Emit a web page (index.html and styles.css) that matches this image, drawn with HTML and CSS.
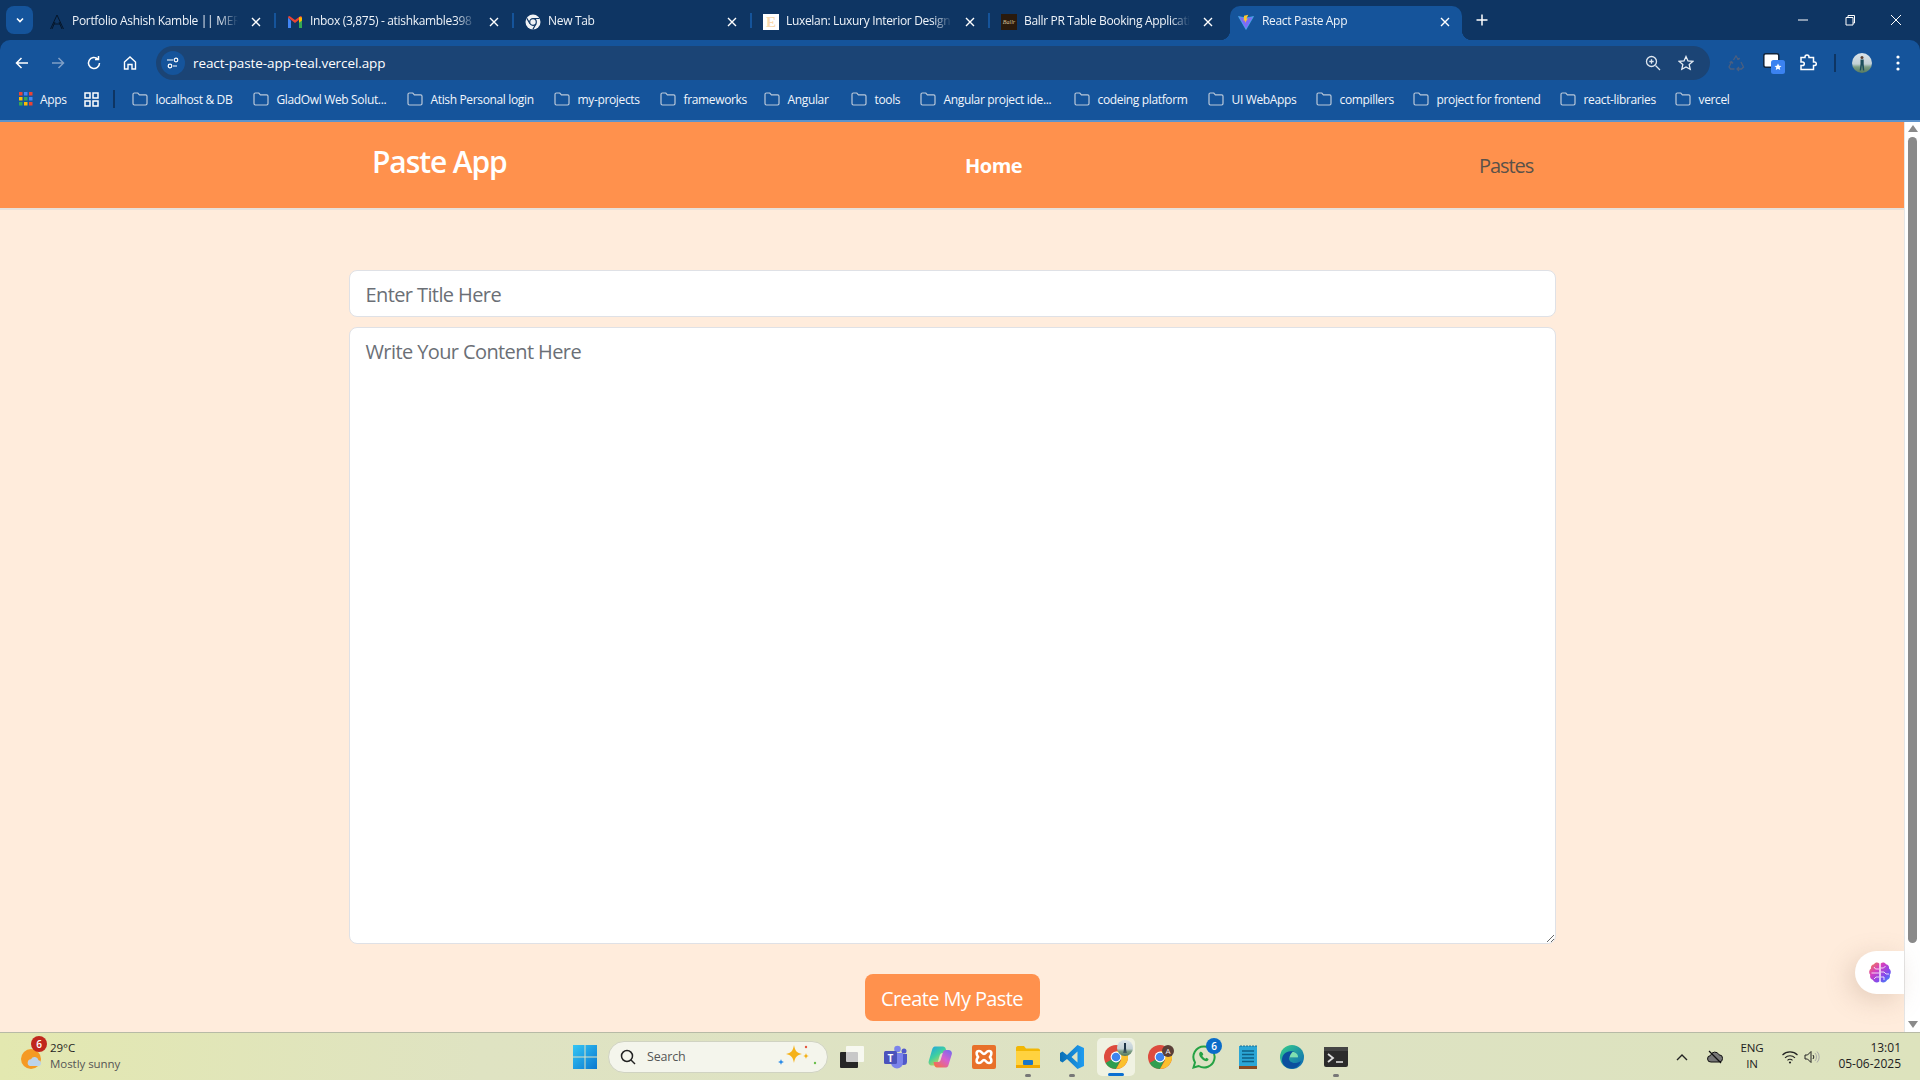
FILE: index.html
```html
<!DOCTYPE html>
<html lang="en">
<head>
<meta charset="utf-8">
<title>React Paste App</title>
<link rel="stylesheet" href="styles.css">
</head>
<body>
<svg class="defs" width="0" height="0" aria-hidden="true">
  <defs>
    <symbol id="x" viewBox="0 0 12 12"><path d="M2 2l8 8M10 2l-8 8" fill="none" stroke="currentColor" stroke-width="1.4"/></symbol>
    <symbol id="folder" viewBox="0 0 16 14"><path d="M1 2.4C1 1.6 1.6 1 2.4 1h3.4l1.6 1.8h6.2c.8 0 1.4.6 1.4 1.4v7.4c0 .8-.6 1.4-1.4 1.4H2.4c-.8 0-1.4-.6-1.4-1.4z" fill="none" stroke="#b9c8da" stroke-width="1.2"/></symbol>
    <symbol id="chrome" viewBox="0 0 24 24">
      <circle cx="12" cy="12" r="12" fill="#dd4b3e"/>
      <path d="M12 12l-5.200 3L1.600 18A12 12 0 0 0 12 24l6-12z" fill="#2f9e4f"/>
      <path d="M12 6h10.400A12 12 0 0 1 12 24l5.200-9z" fill="#fbc02d"/>
      <circle cx="12" cy="12" r="5.400" fill="#fff"/>
      <circle cx="12" cy="12" r="4.300" fill="#3f84ee"/>
    </symbol>
    <linearGradient id="win" x1="0" y1="0" x2="1" y2="1"><stop offset="0" stop-color="#35c6f4"/><stop offset="1" stop-color="#0a78d0"/></linearGradient>
    <linearGradient id="brain" x1="0" y1="0" x2="1" y2="1"><stop offset="0" stop-color="#f5873f"/><stop offset=".35" stop-color="#d63ec0"/><stop offset=".7" stop-color="#7a4df0"/><stop offset="1" stop-color="#2f9bf5"/></linearGradient>
    <linearGradient id="vs" x1="0" y1="0" x2="1" y2="0"><stop offset="0" stop-color="#0a6fb5"/><stop offset="1" stop-color="#1f9cf0"/></linearGradient>
    <linearGradient id="cop-a" x1="0" y1="0" x2=".7" y2="1"><stop offset="0" stop-color="#1f9fe8"/><stop offset=".5" stop-color="#3fd0a0"/><stop offset="1" stop-color="#f5d33c"/></linearGradient>
    <linearGradient id="cop-b" x1="1" y1="0" x2=".2" y2="1"><stop offset="0" stop-color="#6c6cf0"/><stop offset=".5" stop-color="#d65fd0"/><stop offset="1" stop-color="#f5704a"/></linearGradient>
    <linearGradient id="edge" x1="0" y1="0" x2="1" y2="1"><stop offset="0" stop-color="#36d08a"/><stop offset="1" stop-color="#0b63b8"/></linearGradient>
    <linearGradient id="sky" x1="0" y1="0" x2="0" y2="1"><stop offset="0" stop-color="#dbe4ea"/><stop offset=".55" stop-color="#c2d0d6"/><stop offset=".7" stop-color="#7b9d84"/><stop offset="1" stop-color="#55795f"/></linearGradient>
  </defs>
</svg>

<div class="chrome">
  <div class="tabstrip">
    <button class="tab-switch"><svg width="12" height="12" viewBox="0 0 12 12"><path d="M3 4.500l3 3 3-3" fill="none" stroke="#fff" stroke-width="1.600"/></svg></button>
    <div class="tabs">
      <div class="tab">
        <svg class="fav" viewBox="0 0 16 16"><path d="M1.500 15L8 1l6.500 14M4.500 10h7M3 15l3-7M13 15l-3-7" fill="none" stroke="#05162a" stroke-width="1"/></svg>
        <span class="tab-title">Portfolio Ashish Kamble || MERN</span>
        <svg class="close"><use href="#x"/></svg>
      </div>
      <div class="tab sep">
        <svg class="fav" viewBox="0 0 16 16"><path d="M1 3.500V14h3V6.500z" fill="#4285f4"/><path d="M15 3.500V14h-3V6.500z" fill="#34a853"/><path d="M1 3.500L8 9l7-5.500V2.800L13.500 2 8 6 2.500 2 1 2.800z" fill="#ea4335"/><path d="M12 3l3 .5v3L12 8.800z" fill="#fbbc04"/></svg>
        <span class="tab-title">Inbox (3,875) - atishkamble398</span>
        <svg class="close"><use href="#x"/></svg>
      </div>
      <div class="tab sep">
        <svg class="fav" viewBox="0 0 16 16"><circle cx="8" cy="8" r="7.500" fill="#f1f3f6"/><path d="M8 4.500h6.400M5 9.700L1.800 4.200M11 9.700l-3.200 5.800" stroke="#0e3563" stroke-width="1.200"/><circle cx="8" cy="8" r="3.300" fill="#f1f3f6" stroke="#0e3563" stroke-width="1.200"/></svg>
        <span class="tab-title">New Tab</span>
        <svg class="close"><use href="#x"/></svg>
      </div>
      <div class="tab sep">
        <span class="fav fav-e">E</span>
        <span class="tab-title">Luxelan: Luxury Interior Design</span>
        <svg class="close"><use href="#x"/></svg>
      </div>
      <div class="tab sep">
        <span class="fav fav-b">Ballr</span>
        <span class="tab-title">Ballr PR Table Booking Applicati</span>
        <svg class="close"><use href="#x"/></svg>
      </div>
      <div class="tab active">
        <svg class="fav" viewBox="0 0 16 16"><path d="M.5 2.500L8 15.500l7.500-13L8 4z" fill="#7d6cf5"/><path d="M.5 2.500L8 4l7.500-1.500L8 15.500z" fill="none" stroke="#41c6f5" stroke-width=".6"/><path d="M10.300.8L6 1.800l-.3 5 1.500-.3-.3 2.600 3-4.600-1.600.3z" fill="#ffc72c"/></svg>
        <span class="tab-title">React Paste App</span>
        <svg class="close"><use href="#x"/></svg>
      </div>
    </div>
    <svg class="newtab" width="14" height="14" viewBox="0 0 14 14"><path d="M7 1.500v11M1.500 7h11" stroke="#fff" stroke-width="1.500"/></svg>
    <div class="winctl">
      <svg width="12" height="12" viewBox="0 0 12 12"><path d="M1 6h10" stroke="#fff"/></svg>
      <svg width="12" height="12" viewBox="0 0 12 12"><path d="M2 3.500h7v7.500H2zM4 3.500V1.500h6.500V9H9" fill="none" stroke="#fff"/></svg>
      <svg width="12" height="12" viewBox="0 0 12 12"><path d="M1 1l10 10M11 1L1 11" stroke="#fff"/></svg>
    </div>
  </div>

  <div class="toolbar">
    <div class="nav">
      <svg width="16" height="16" viewBox="0 0 16 16"><path d="M14 8H3M7.500 3L2.500 8l5 5" fill="none" stroke="#fff" stroke-width="1.500"/></svg>
      <svg width="16" height="16" viewBox="0 0 16 16"><path d="M2 8h11M8.500 3l5 5-5 5" fill="none" stroke="#7f9fc6" stroke-width="1.500"/></svg>
      <svg width="16" height="16" viewBox="0 0 16 16"><path d="M13.500 8A5.500 5.500 0 1 1 11.800 4M12.500 1v3.600H9" fill="none" stroke="#fff" stroke-width="1.500"/></svg>
      <svg width="16" height="16" viewBox="0 0 16 16"><path d="M2.500 7L8 2l5.500 5v7H10V9.500H6V14H2.500z" fill="none" stroke="#fff" stroke-width="1.400"/></svg>
    </div>
    <div class="omnibox">
      <span class="site-info"><svg width="14" height="14" viewBox="0 0 14 14"><path d="M1 4h6M11 10H7" stroke="#fff" stroke-width="1.200"/><circle cx="10" cy="4" r="1.800" fill="none" stroke="#fff" stroke-width="1.200"/><circle cx="4" cy="10" r="1.800" fill="none" stroke="#fff" stroke-width="1.200"/></svg></span>
      <span class="url">react-paste-app-teal.vercel.app</span>
      <svg class="omni-zoom" width="16" height="16" viewBox="0 0 16 16"><circle cx="6.500" cy="6.500" r="5" fill="none" stroke="#dfe7f0" stroke-width="1.300"/><path d="M10.500 10.500L15 15M4.300 6.500h4.400M6.500 4.300v4.400" stroke="#dfe7f0" stroke-width="1.300"/></svg>
      <svg class="omni-star" width="16" height="16" viewBox="0 0 16 16"><path d="M8 1.500l2 4.400 4.800.5-3.600 3.200 1 4.700L8 11.900l-4.200 2.400 1-4.700L1.200 6.400 6 5.900z" fill="none" stroke="#e6edf5" stroke-width="1.300"/></svg>
    </div>
    <div class="actions">
      <svg class="a-recycle" width="18" height="18" viewBox="0 0 18 18"><path d="M6.500 6L9 2l2.500 4M10 5l3-.5M14 8l2.500 5-2 2h-4M12 13l-2 2 2 2M7.500 15H3.500L2 13l2.500-5M2.500 8.500L4.500 7.500 6 9.500" fill="none" stroke="#4a5f80" stroke-width="1.300"/></svg>
      <span class="a-tabs"><svg width="24" height="28" viewBox="0 0 24 28"><rect x=".8" y="4.800" width="15" height="13.500" rx="2" fill="#fff" stroke="#10243c" stroke-width="1.500"/><rect x="8" y="11" width="14" height="14" rx="2.500" fill="#3b82f0"/><path d="M15 14.500l1.100 2.200 2.400.3-1.800 1.600.5 2.400-2.200-1.200-2.200 1.200.5-2.400-1.800-1.600 2.400-.3z" fill="#fff"/></svg></span>
      <svg class="a-puzzle" width="18" height="18" viewBox="0 0 18 18"><path d="M2 3.500h4V3a2 2 0 0 1 4 0v.5h4.500V8h1a1.800 1.800 0 0 1 0 3.600h-1v4H2v-4h1.500a1.800 1.800 0 0 0 0-3.600H2z" fill="none" stroke="#fff" stroke-width="1.500"/></svg>
      <span class="a-sep"></span>
      <span class="avatar"><svg width="20" height="20" viewBox="0 0 20 20"><rect width="20" height="20" fill="url(#sky)"/><circle cx="10" cy="4.500" r="1.500" fill="#5b4033"/><path d="M8.500 6.500h3.200V11l.6 6.500h-1.400L10 12l-.9 5.500H7.700L8.500 11z" fill="#1d4e5c"/></svg></span>
      <svg class="a-menu" width="4" height="16" viewBox="0 0 4 16"><circle cx="2" cy="2" r="1.600" fill="#fff"/><circle cx="2" cy="8" r="1.600" fill="#fff"/><circle cx="2" cy="14" r="1.600" fill="#fff"/></svg>
    </div>
  </div>

  <div class="bookmarks">
    <div class="bm-apps">
      <svg width="14" height="14" viewBox="0 0 14 14"><g><rect width="3.500" height="3.500" fill="#ea4335"/><rect x="5" width="3.500" height="3.500" fill="#4285f4"/><rect x="10" width="3.500" height="3.500" fill="#ea4335"/><rect y="5" width="3.500" height="3.500" fill="#fbbc04"/><rect x="5" y="5" width="3.500" height="3.500" fill="#34a853"/><rect x="10" y="5" width="3.500" height="3.500" fill="#4285f4"/><rect y="10" width="3.500" height="3.500" fill="#34a853"/><rect x="5" y="10" width="3.500" height="3.500" fill="#fbbc04"/><rect x="10" y="10" width="3.500" height="3.500" fill="#ea4335"/></g></svg>
      <span>Apps</span>
    </div>
    <div class="bm-grid"><svg width="15" height="15" viewBox="0 0 15 15"><path d="M1 1h5v5H1zM9 1h5v5H9zM1 9h5v5H1zM9 9h5v5H9z" fill="none" stroke="#fff" stroke-width="1.500"/></svg></div>
    <div class="bm-sep"></div>
    <div class="bm-list">
      <div class="bm"><svg><use href="#folder"/></svg><span>localhost &amp; DB</span></div>
      <div class="bm"><svg><use href="#folder"/></svg><span>GladOwl Web Solut...</span></div>
      <div class="bm"><svg><use href="#folder"/></svg><span>Atish Personal login</span></div>
      <div class="bm"><svg><use href="#folder"/></svg><span>my-projects</span></div>
      <div class="bm"><svg><use href="#folder"/></svg><span>frameworks</span></div>
      <div class="bm"><svg><use href="#folder"/></svg><span>Angular</span></div>
      <div class="bm"><svg><use href="#folder"/></svg><span>tools</span></div>
      <div class="bm"><svg><use href="#folder"/></svg><span>Angular project ide...</span></div>
      <div class="bm"><svg><use href="#folder"/></svg><span>codeing platform</span></div>
      <div class="bm"><svg><use href="#folder"/></svg><span>UI WebApps</span></div>
      <div class="bm"><svg><use href="#folder"/></svg><span>compillers</span></div>
      <div class="bm"><svg><use href="#folder"/></svg><span>project for frontend</span></div>
      <div class="bm"><svg><use href="#folder"/></svg><span>react-libraries</span></div>
      <div class="bm"><svg><use href="#folder"/></svg><span>vercel</span></div>
    </div>
  </div>
</div>

<div class="viewport">
  <div class="page">
    <header class="app-header">
      <h1 class="brand">Paste App</h1>
      <a class="nav-link current">Home</a>
      <a class="nav-link">Pastes</a>
    </header>
    <main class="editor">
      <input class="field title-field" type="text" placeholder="Enter Title Here">
      <textarea class="field content-field" placeholder="Write Your Content Here"></textarea>
      <button class="create">Create My Paste</button>
    </main>
  </div>
  <div class="scrollbar">
    <svg width="10" height="7" viewBox="0 0 10 7"><path d="M5 0l5 7H0z" fill="#8a8a8a"/></svg>
    <div class="thumb"></div>
    <svg width="10" height="7" viewBox="0 0 10 7"><path d="M0 0h10L5 7z" fill="#8a8a8a"/></svg>
  </div>
  <div class="brain-widget">
    <svg width="24" height="24" viewBox="0 0 24 24"><path d="M11.300 2.500C9.500 1 7 1.500 6 3.300 3.800 3.500 2.500 5.500 3 7.600 1 9 .5 12 2.200 13.800 1.500 16.500 3 18.500 5 19c.8 2.500 4.300 3.400 6.300 1.500zM12.700 2.500c1.800-1.500 4.300-1 5.300.8 2.200.2 3.500 2.200 3 4.300 2 1.400 2.500 4.400.8 6.200.7 2.700-.8 4.700-2.800 5.200-.8 2.500-4.300 3.400-6.300 1.500z" fill="url(#brain)"/><path d="M11 8H7.500L6 6M11 12H3.500M11 16H8l-2 2M13 7h2.500l2-2M13 11h3l2 2h3M13 16h3v3" fill="none" stroke="#fff" stroke-width=".8"/></svg>
  </div>
</div>

<footer class="taskbar">
  <div class="weather">
    <span class="w-icon">
      <svg width="24" height="24" viewBox="0 0 24 24"><circle cx="11" cy="13" r="10" fill="#f59a23"/><path d="M10 20a3.500 3.500 0 0 1 1-6.800 4 4 0 0 1 7.500 1 3 3 0 0 1 .5 5.800z" fill="#bcd3ea"/></svg>
      <span class="w-badge">6</span>
    </span>
    <div class="w-text"><span class="w-temp">29°C</span><span class="w-desc">Mostly sunny</span></div>
  </div>
  <div class="center">
    <svg class="winlogo" width="24" height="24" viewBox="0 0 24 24"><path d="M0 0h11.500v11.500H0zM12.500 0H24v11.500H12.500zM0 12.500h11.500V24H0zM12.500 12.500H24V24H12.500z" fill="url(#win)"/></svg>
    <div class="search">
      <svg width="16" height="16" viewBox="0 0 16 16"><circle cx="7" cy="7" r="5.500" fill="none" stroke="#222" stroke-width="1.500"/><path d="M11 11l4 4" stroke="#222" stroke-width="1.500"/></svg>
      <span class="s-text">Search</span>
      <svg class="s-spark" width="40" height="26" viewBox="0 0 40 26"><path d="M16 1c1 6 3 8 8 9-5 1-7 3-8 9-1-6-3-8-8-9 5-1 7-3 8-9z" fill="#f5b21a"/><path d="M3 15c.5 2 1 2.500 3 3-2 .5-2.500 1-3 3-.5-2-1-2.500-3-3 2-.5 2.500-1 3-3z" fill="#2d8de8"/><path d="M28 9c.4 2 1 2.600 3 3-2 .4-2.600 1-3 3-.4-2-1-2.600-3-3 2-.4 2.600-1 3-3z" fill="#f5b21a"/><circle cx="28" cy="3" r="1.200" fill="#e5543e"/><circle cx="37" cy="19" r="1.200" fill="#6abf4b"/></svg>
    </div>
    <div class="apps">
      <div class="app"><svg width="24" height="22" viewBox="0 0 24 22"><rect x="0" y="6" width="18" height="16" rx="1" fill="#262626"/><rect x="6" y="0" width="18" height="16" rx="1" fill="#fff" opacity=".75"/></svg></div>
      <div class="app"><svg width="24" height="24" viewBox="0 0 24 24"><circle cx="13.500" cy="4" r="3.300" fill="#7b83eb"/><circle cx="20" cy="6" r="2.500" fill="#5059c9"/><path d="M16 9h7v7.500a3.500 3.500 0 0 1-7 0z" fill="#5059c9"/><path d="M7 8h12v9.500a6 6 0 0 1-12 0z" fill="#7b83eb"/><rect y="6" width="13" height="13" rx="1.500" fill="#4b53bc"/><text x="6.500" y="16.500" class="t-letter">T</text></svg></div>
      <div class="app"><svg width="24" height="24" viewBox="0 0 24 24"><path d="M7 1.500h8c1.500 0 2.300 1 2.700 2.200L19 8h-4.500c-1.500 0-2.300 1-2.700 2.300L9.500 18c-.5 1.500-1.400 2.500-3 2.500H4C1.500 20.500 0 18.500.8 16L4 5c.5-2 1.500-3.500 3-3.500z" fill="url(#cop-a)"/><path d="M17 22.500H9c-1.500 0-2.300-1-2.700-2.200L5.500 17h4.500c1.500 0 2.300-1 2.700-2.300l2.300-7.500c.5-1.500 1.400-2.200 3-2.200h2.500c2.500 0 4 2 3.200 4.500l-3.200 10.500c-.5 2-1.500 2.500-3.500 2.500z" fill="url(#cop-b)"/></svg></div>
      <div class="app"><svg width="24" height="24" viewBox="0 0 24 24"><rect width="24" height="24" rx="2" fill="#e8702a"/><path d="M7 6c3 0 3 3 5 3s2-3 5-3 3 3 1 6c2 3 2 6-1 6s-3-3-5-3-2 3-5 3-3-3-1-6c-2-3-2-6 1-6z" fill="none" stroke="#fff" stroke-width="2.600"/></svg></div>
      <div class="app running"><svg width="24" height="24" viewBox="0 0 24 24"><path d="M0 3c0-1 .6-2 2-2h6l2 2.500h12c1.300 0 2 .8 2 2V21c0 1.200-.8 2-2 2H2c-1.300 0-2-.8-2-2z" fill="#f2b705"/><path d="M0 6h24v15c0 1.200-.8 2-2 2H2c-1.300 0-2-.8-2-2z" fill="#ffd23f"/><rect x="7" y="15" width="10" height="5" rx="1" fill="#1976c9"/><rect y="20" width="24" height="3" fill="#f2a900"/></svg></div>
      <div class="app running"><svg width="24" height="24" viewBox="0 0 24 24"><path d="M17.500 0L24 3v18l-6.500 3L7 14l-4.500 3.500L0 16V8l2.500-1.500L7 10zM17.500 6.500L11.500 12l6 5.500z" fill="url(#vs)"/></svg></div>
      <div class="app current">
        <svg width="24" height="24"><use href="#chrome"/></svg>
        <span class="mini-avatar"><svg width="16" height="16" viewBox="0 0 16 16"><rect width="16" height="16" fill="url(#sky)"/><path d="M7 3h2v5l.5 5h-1L8 9l-.5 4h-1L7 8z" fill="#1d3348"/></svg></span>
      </div>
      <div class="app">
        <svg width="24" height="24"><use href="#chrome"/></svg>
        <span class="mini-a">A</span>
      </div>
      <div class="app">
        <svg width="24" height="24" viewBox="0 0 24 24"><path d="M12 1.500A10.500 10.500 0 0 0 3 17.500L1.500 22.500 6.700 21A10.500 10.500 0 1 0 12 1.500z" fill="none" stroke="#25a244" stroke-width="2"/><path d="M8 7c-1.500 1.500-1 4 1.500 6.500S14.500 17 16 15.500c1-1 .5-1.700-1.500-2.700l-1.200 1c-1-.4-2.500-1.900-3-3l1-1.200C11 8 9.500 6 8 7z" fill="#25a244"/></svg>
        <span class="mini-badge">6</span>
      </div>
      <div class="app"><svg width="18" height="24" viewBox="0 0 18 24"><rect y="1" width="18" height="21" fill="#2ba6d6"/><rect y="21" width="18" height="3" fill="#8a4b22"/><path d="M3 6h12M3 9.500h12M3 13h12M3 16.500h12" stroke="#0e5f85" stroke-width="1.300"/><path d="M2 0v2M5 0v2M8 0v2M11 0v2M14 0v2M17 0v2" stroke="#1c6f94"/></svg></div>
      <div class="app"><svg width="24" height="24" viewBox="0 0 24 24"><circle cx="12" cy="12" r="12" fill="url(#edge)"/><path d="M2 15c0-6 5-10 11-8.500 4 1 5 4 4 6H9c-.5 3 2 5.500 6 5.500 2 0 4-.5 6-2-1.500 5-5.500 8-10 7.500C6 23 2 20 2 15z" fill="#0b4f9e"/><path d="M9.500 12.500h7.500c.5 0 1-.3 1-1C18 9 15 6.500 12.500 7 11 8.500 9.800 10.500 9.500 12.500z" fill="#7fe0b0"/></svg></div>
      <div class="app running"><svg width="24" height="20" viewBox="0 0 24 20"><rect width="24" height="20" rx="2" fill="#2b2b2b"/><rect width="24" height="4" fill="#444"/><path d="M4 7l5 4-5 4" fill="none" stroke="#ddd" stroke-width="1.800"/><path d="M12 15h7" stroke="#ddd" stroke-width="1.600"/></svg></div>
    </div>
  </div>
  <div class="tray">
    <svg class="t-chev" width="12" height="8" viewBox="0 0 12 8"><path d="M1 7l5-5 5 5" fill="none" stroke="#222" stroke-width="1.400"/></svg>
    <svg class="t-cloud" width="16" height="14" viewBox="0 0 16 14"><path d="M4 12a3.200 3.200 0 0 1-.5-6.400 4.500 4.500 0 0 1 8.500-.8 3.600 3.600 0 0 1 0 7.200z" fill="#777" stroke="#111"/><path d="M2 1l12 12" stroke="#111" stroke-width="1.300"/></svg>
    <div class="t-lang"><span>ENG</span><span>IN</span></div>
    <svg class="t-wifi" width="16" height="14" viewBox="0 0 16 14"><path d="M.5 5a10.500 10.500 0 0 1 15 0M3 7.800a7 7 0 0 1 10 0M5.500 10.300a3.500 3.500 0 0 1 5 0" fill="none" stroke="#222" stroke-width="1.100"/><circle cx="8" cy="12.500" r="1.100" fill="#222"/></svg>
    <svg class="t-vol" width="16" height="14" viewBox="0 0 16 14"><path d="M1 5h2.500L7 1.500v11L3.500 9H1z" fill="none" stroke="#222"/><path d="M9 5a3 3 0 0 1 0 4" fill="none" stroke="#222"/><path d="M11 3a6 6 0 0 1 0 8M13 1.500a8 8 0 0 1 0 11" fill="none" stroke="#aaa"/></svg>
    <div class="t-clock"><span>13:01</span><span>05-06-2025</span></div>
  </div>
</footer>
</body>
</html>
```

FILE: styles.css
```css
* { box-sizing: border-box; }
html, body { margin: 0; height: 100%; }
body {
  width: 1920px;
  height: 1080px;
  display: flex;
  flex-direction: column;
  overflow: hidden;
  font-family: "Open Sans", "Noto Sans", sans-serif;
  background: #0e3563;
}
.defs { position: absolute; }

/* browser chrome */
.chrome { flex: none; height: 122px; display: flex; flex-direction: column; background: #0e3563; color: #fff; }
.tabstrip { height: 40px; display: flex; padding-left: 6px; position: relative; }
.tab-switch { width: 27px; height: 28px; margin: 6px 3px 0 0; border: 0; border-radius: 8px; background: #15549b; display: flex; align-items: center; justify-content: center; padding: 0; }
.tabs { display: grid; grid-template-columns: repeat(6, 238px); }
.tab { position: relative; display: flex; align-items: center; height: 34px; margin-top: 6px; padding: 0 0 0 13px; font-size: 12px; letter-spacing: -.32px; color: #eef3f9; }
.sep::before { content: ""; position: absolute; left: 0; top: 7px; width: 1.500px; height: 15px; background: #15549b; }
.fav { width: 16px; height: 16px; flex: none; margin-top: -3px; }
.fav-e { background: #fff; color: #f9d9ae; font: 700 15px/16px "Liberation Serif", serif; text-align: center; letter-spacing: 0; }
.fav-b { background: #2a1a0c; color: #d8c29a; font: italic 6px/16px "Liberation Serif", serif; text-align: center; letter-spacing: 0; overflow: hidden; }
.tab-title { width: 166px; margin-left: 7px; white-space: nowrap; overflow: hidden; -webkit-mask-image: linear-gradient(90deg, #000 88%, transparent 100%); mask-image: linear-gradient(90deg, #000 88%, transparent 100%); margin-top: -4px; line-height: 18px; }
.close { width: 12px; height: 12px; margin-left: 12px; margin-top: -3px; color: #fff; flex: none; }
.tab.active { background: #15549b; margin-left: 4px; width: 232px; border-radius: 10px 10px 0 0; padding-left: 8px; }
.tab.active .tab-title { margin-left: 8px; }
.tab.active .close { margin-left: 11px; }
.tab.active::before, .tab.active::after { content: ""; position: absolute; bottom: 0; width: 10px; height: 10px; }
.tab.active::before { left: -10px; background: radial-gradient(circle at 0 0, transparent 10px, #15549b 10.500px); }
.tab.active::after { right: -10px; background: radial-gradient(circle at 100% 0, transparent 10px, #15549b 10.500px); }
.newtab { margin: 13px 0 0 11px; flex: none; }
.winctl { margin-left: auto; display: grid; grid-template-columns: 48px 45px 48px; justify-items: center; padding: 14px 0 0 0; width: 141px; }
.winctl svg { display: block; }
.toolbar { height: 40px; background: #15549b; border-radius: 10px 10px 0 0; display: flex; align-items: center; padding-top: 6px; }
.nav { width: 156px; display: grid; grid-template-columns: 16px 16px 16px 16px; column-gap: 20px; padding-left: 14px; }
.omnibox { width: 1554px; height: 34px; border-radius: 17px; background: #1b4475; display: flex; align-items: center; padding-right: 16px; font-size: 13.500px; }
.site-info { width: 24px; height: 24px; margin-left: 5px; border-radius: 50%; background: #15549b; display: flex; align-items: center; justify-content: center; }
.url { margin-left: 8px; letter-spacing: -.09px; }
.omni-zoom { margin-left: auto; }
.omni-star { margin-left: 17px; }
.actions { flex: 1; display: flex; align-items: center; }
.a-recycle { margin-left: 17px; }
.a-tabs { margin-left: 18px; height: 28px; }
.a-tabs svg { display: block; }
.a-puzzle { margin-left: 12px; }
.a-sep { width: 1.500px; height: 18px; background: #0e3563; margin-left: 17px; }
.avatar { width: 20px; height: 20px; border-radius: 50%; overflow: hidden; margin-left: 16.500px; }
.avatar svg { display: block; }
.a-menu { margin-left: 24px; }
.bookmarks { height: 42px; background: #15549b; display: flex; align-items: center; padding: 0 0 2px 19px; font-size: 12px; letter-spacing: -.35px; color: #f2f6fb; border-bottom: 2px solid #5d93cc; }
.bm-apps { width: 65px; display: flex; align-items: center; gap: 7px; }
.bm-grid { width: 29px; display: flex; }
.bm-sep { width: 1.500px; height: 18px; background: #0e3563; margin-right: 17px; }
.bm-list { display: grid; grid-template-columns: 121px 154px 147px 106px 104px 87px 69px 154px 134px 108px 97px 147px 115px 100px; }
.bm { display: flex; align-items: center; gap: 8px; white-space: nowrap; }
.bm svg { width: 16px; height: 14px; flex: none; }

/* page */
.viewport { flex: none; height: 910px; display: flex; position: relative; background: #ffecdc; }
.page { width: 1904px; display: flex; flex-direction: column; }
.app-header { height: 88px; flex: none; background: #ff914d; border-bottom: 2px solid #e8e1da; display: flex; padding-left: 372px; }
.brand { margin: 0; width: 593px; font-size: 30px; line-height: 40px; font-weight: 600; color: #fff; padding-top: 20px; letter-spacing: -1.100px; }
.nav-link { font-size: 20px; line-height: 28px; padding-top: 30px; color: #5a5149; letter-spacing: -1.050px; }
.nav-link.current { width: 514px; color: #fff; font-weight: 700; letter-spacing: -.5px; }
.editor { display: flex; flex-direction: column; align-items: center; padding-top: 60px; }
.field { display: block; width: 1207px; border: 1px solid #dfe1e6; border-radius: 8px; background: #fff; font-family: inherit; font-size: 20px; letter-spacing: -.6px; padding: 2px 15px 0 16px; color: #333; outline: none; }
.field::placeholder { color: #6b6f76; opacity: 1; }
.title-field { height: 47px; }
.content-field { height: 617px; margin-top: 10px; padding-top: 10px; line-height: 28px; }
.create { margin-top: 30px; width: 175px; height: 47px; border: 0; border-radius: 8px; background: #ff914d; color: #fff; font-family: inherit; font-size: 20px; letter-spacing: -.6px; padding: 2px 0 0; }

.scrollbar { width: 16px; background: #fff; border-left: 1px solid #e6e6e6; display: flex; flex-direction: column; align-items: center; padding: 3px 0; }
.thumb { width: 9px; height: 806px; margin: 5px 0 78px; border-radius: 5px; background: #8a8a8a; }
.brain-widget { position: absolute; left: 1855px; top: 829px; width: 49px; height: 43px; border-radius: 22px 0 0 22px; background: #fff; box-shadow: -6px 6px 24px rgba(170, 140, 120, .3); display: flex; align-items: center; justify-content: center; }

/* taskbar */
.taskbar { flex: none; height: 48px; background: linear-gradient(90deg, #e3e8b0 0, #dfe3c2 25%, #dde2c4 60%, #dde3bd 100%); border-top: 1px solid #b7baa6; display: flex; align-items: center; color: #1f1f1f; position: relative; }
.weather { width: 573px; flex: none; display: flex; padding-left: 20px; align-items: center; height: 100%; }
.w-icon { position: relative; width: 24px; height: 24px; flex: none; margin-top: 3px; }
.w-icon svg { display: block; }
.w-badge { position: absolute; left: 11px; top: -10px; width: 16px; height: 16px; border-radius: 50%; background: #c0271d; color: #fff; font-size: 10px; font-weight: 600; line-height: 16px; text-align: center; }
.w-text { display: flex; flex-direction: column; margin: -2px 0 0 6px; font-size: 11.500px; line-height: 16px; letter-spacing: -.05px; }
.w-desc { color: #555; }
.center { display: flex; align-items: center; width: 780px; flex: none; }
.winlogo { flex: none; }
.search { width: 220px; flex: none; height: 32px; margin-left: 11px; border-radius: 16px; background: #f4f5ec; border: 1px solid #d0d3c2; display: flex; align-items: center; padding: 0 9px 0 11px; font-size: 12.500px; color: #555; letter-spacing: -.2px; }
.s-text { margin-left: 11px; }
.s-spark { margin-left: auto; }
.apps { display: flex; flex: none; margin-left: 2px; }
.app { position: relative; width: 44px; height: 38px; display: flex; align-items: center; justify-content: center; flex: none; }
.app.running::after { content: ""; position: absolute; left: 19px; bottom: -1px; width: 6px; height: 3px; border-radius: 2px; background: #777; }
.app.current { background: #f0f2e2; border-radius: 5px; width: 38px; margin: 0 3px; }
.app.current::after { content: ""; position: absolute; left: 11px; bottom: 0; width: 16px; height: 3px; border-radius: 2px; background: #0b6fd1; }
.t-letter { fill: #fff; font-size: 10px; font-weight: 700; text-anchor: middle; font-family: "Open Sans", sans-serif; }
.mini-avatar { position: absolute; right: 2px; top: 2px; width: 16px; height: 16px; border-radius: 50%; overflow: hidden; }
.mini-avatar svg { display: block; }
.mini-a { position: absolute; left: 24px; top: 7px; width: 12px; height: 12px; border-radius: 50%; background: #5a3f38; color: #eee; font-size: 8px; line-height: 12px; text-align: center; }
.mini-badge { position: absolute; left: 24px; top: 0; width: 16px; height: 16px; border-radius: 50%; background: #0a6cc9; color: #fff; font-size: 10px; font-weight: 600; line-height: 16px; text-align: center; }
.tray { flex: 1; display: flex; align-items: center; font-size: 12px; letter-spacing: -.2px; color: #222; }
.t-chev { margin-left: 323px; flex: none; }
.t-cloud { margin-left: 19px; flex: none; }
.t-lang { width: 30px; margin: -2px 0 0 14px; display: flex; flex-direction: column; align-items: center; line-height: 16px; font-size: 11.500px; }
.t-wifi { margin-left: 15px; flex: none; }
.t-vol { margin-left: 6px; flex: none; }
.t-clock { margin: -2px 19px 0 auto; display: flex; flex-direction: column; align-items: flex-end; line-height: 16px; font-size: 12px; letter-spacing: 0; }
```
